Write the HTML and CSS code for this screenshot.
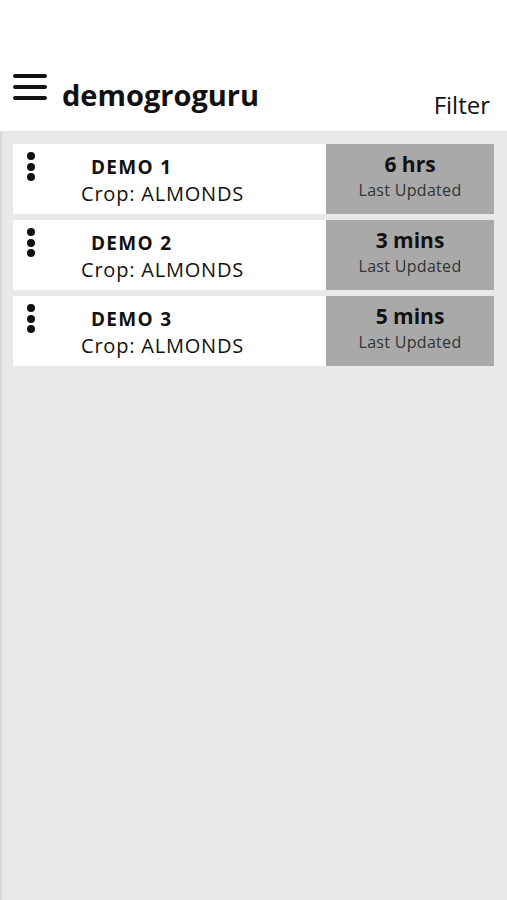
FILE: index.html
```html
<!DOCTYPE html>
<html lang="en">
<head>
    <meta charset="UTF-8">
    <title>demogroguru</title>
    <link rel="stylesheet" href="styles.css">
</head>
<body>

<div class="header">
    <div class="brand">
        <div class="menu-icon">
            <span></span><span></span><span></span>
        </div>
        <h1>demogroguru</h1>
    </div>
    <a class="filter" href="#">Filter</a>
</div>

<div class="list">
    <div class="card">
        <div class="dots"><span></span><span></span><span></span></div>
        <div class="info">
            <div class="name">DEMO 1</div>
            <div class="crop">Crop: ALMONDS</div>
        </div>
        <div class="updated">
            <div class="time">6 hrs</div>
            <div class="label">Last Updated</div>
        </div>
    </div>
    <div class="card">
        <div class="dots"><span></span><span></span><span></span></div>
        <div class="info">
            <div class="name">DEMO 2</div>
            <div class="crop">Crop: ALMONDS</div>
        </div>
        <div class="updated">
            <div class="time">3 mins</div>
            <div class="label">Last Updated</div>
        </div>
    </div>
    <div class="card">
        <div class="dots"><span></span><span></span><span></span></div>
        <div class="info">
            <div class="name">DEMO 3</div>
            <div class="crop">Crop: ALMONDS</div>
        </div>
        <div class="updated">
            <div class="time">5 mins</div>
            <div class="label">Last Updated</div>
        </div>
    </div>
</div>

</body>
</html>
```

FILE: styles.css
```css
html, body {
    height: 100%;
}
body {
    margin: 0;
    font-family: "Open Sans", Arial, sans-serif;
    color: #111;
    background-color: #e9e9e9;
    box-shadow: inset 3px 0 3px -2px rgba(0,0,0,.12);
}
.header {
    background: #fff;
    height: 131px;
    display: flex;
    align-items: flex-end;
    justify-content: space-between;
    padding: 0 17px 14px 13px;
    box-sizing: border-box;
}
.brand {
    display: flex;
    align-items: flex-end;
}
.menu-icon {
    width: 34px;
    display: flex;
    flex-direction: column;
    gap: 7px;
    margin-bottom: 17px;
}
.menu-icon span {
    display: block;
    height: 4px;
    background: #111;
    border-radius: 2px;
}
.header h1 {
    margin: 0 0 0 15px;
    font-size: 29px;
    font-weight: 700;
    line-height: 1;
    padding-bottom: 8px;
}
.filter {
    font-size: 24px;
    color: #111;
    text-decoration: none;
    line-height: 1;
}
.list {
    padding: 13px 13px;
    display: flex;
    flex-direction: column;
    gap: 6px;
}
.card {
    display: flex;
    height: 70px;
    background: #fff;
}
.dots {
    width: 36px;
    padding-top: 8px;
    display: flex;
    flex-direction: column;
    align-items: center;
    gap: 2.5px;
}
.dots span {
    width: 8px;
    height: 8px;
    border-radius: 50%;
    background: #111;
}
.info {
    flex: 1;
    padding: 11px 0 0 32px;
}
.name {
    font-weight: 700;
    font-size: 19px;
    letter-spacing: 1.3px;
    margin-left: 10px;
    line-height: 24px;
}
.crop {
    font-size: 20px;
    line-height: 30px;
    letter-spacing: .8px;
}
.updated {
    width: 168px;
    background: #a9a9a9;
    text-align: center;
    padding-top: 7px;
}
.time {
    font-weight: 700;
    font-size: 21px;
    line-height: 26px;
}
.label {
    font-size: 16px;
    color: #333;
    line-height: 27px;
    letter-spacing: .3px;
}
```
